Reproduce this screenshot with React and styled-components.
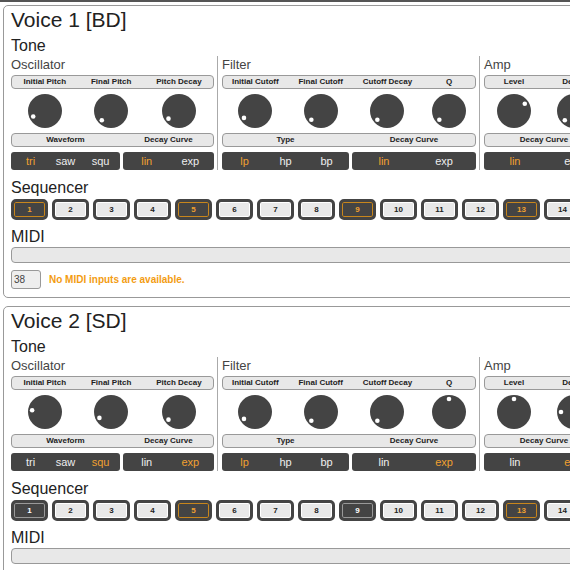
import React from 'react'
import styled, { createGlobalStyle } from 'styled-components'

const GlobalStyle = createGlobalStyle`
  html, body {
    margin: 0;
    padding: 0;
    overflow: hidden;
    background: #fff;
  }
  body {
    font-family: 'Liberation Sans', Arial, sans-serif;
    color: #222;
  }
`

const ORANGE = '#f0a030'

const voices = [
  {
    name: 'Voice 1 [BD]',
    osc: [-115, -135, -126],
    filter: [-122, -132, -132, -132],
    amp: [56, -135],
    wave: 'tri',
    oscCurve: 'lin',
    type: 'lp',
    filterCurve: 'lin',
    ampCurve: 'lin',
    steps: { 1: 'on', 5: 'on', 9: 'on', 13: 'on' },
    note: 38,
  },
  {
    name: 'Voice 2 [SD]',
    osc: [-82, -117, -126],
    filter: [-122, -132, -132, 0],
    amp: [0, -90],
    wave: 'squ',
    oscCurve: 'exp',
    type: 'lp',
    filterCurve: 'exp',
    ampCurve: 'exp',
    steps: { 1: 'mark', 5: 'on', 9: 'mark', 13: 'on' },
    note: 40,
  },
  {
    name: 'Voice 3 [HH]',
    osc: [-90, -120, -126],
    filter: [-122, -132, -132, 0],
    amp: [0, -90],
    wave: 'saw',
    oscCurve: 'lin',
    type: 'hp',
    filterCurve: 'lin',
    ampCurve: 'exp',
    steps: { 3: 'on', 7: 'on', 11: 'on', 15: 'on' },
    note: 42,
  },
]

const Knob = ({ angle }) => {
  const rad = (angle * Math.PI) / 180
  const x = 17 + 13 * Math.sin(rad)
  const y = 17 - 13 * Math.cos(rad)
  return (
    <svg width="34" height="34" viewBox="0 0 34 34">
      <circle cx="17" cy="17" r="17" fill="#444" />
      <circle cx={x} cy={y} r="2.3" fill="#fff" />
    </svg>
  )
}

const KnobSet = ({ labels, values }) => {
  const cols = ['1fr']
  labels.forEach((_, i) => {
    cols.push('auto')
    cols.push(i === labels.length - 1 ? '1fr' : '2fr')
  })
  return (
    <KnobGrid $cols={cols.join(' ')}>
      {labels.map((l, i) => (
        <GridLabel key={l} $col={i * 2 + 2}>
          {l}
        </GridLabel>
      ))}
      {values.map((v, i) => (
        <KnobCell key={i} $col={i * 2 + 2}>
          <Knob angle={v} />
        </KnobCell>
      ))}
    </KnobGrid>
  )
}

const SwitchSet = ({ groups }) => (
  <SwitchGrid $cols={groups.map((g) => `${g.size}fr`).join(' ')}>
    {groups.map((g, i) => (
      <GridLabel key={g.label} $col={i + 1}>
        {g.label}
      </GridLabel>
    ))}
    {groups.map((g, i) => (
      <SwitchGroup key={i} $col={i + 1}>
        {g.options.map((o) => (
          <Option key={o} $active={o === g.value}>
            {o}
          </Option>
        ))}
      </SwitchGroup>
    ))}
  </SwitchGrid>
)

const Voice = ({ v }) => (
  <VoiceBox>
    <VoiceTitle>{v.name}</VoiceTitle>
    <Heading>Tone</Heading>
    <ToneRow>
      <Section $width={203}>
        <SectionTitle>Oscillator</SectionTitle>
        <KnobSet labels={['Initial Pitch', 'Final Pitch', 'Pitch Decay']} values={v.osc} />
        <SwitchSet
          groups={[
            { label: 'Waveform', size: 109, options: ['tri', 'saw', 'squ'], value: v.wave },
            { label: 'Decay Curve', size: 91, options: ['lin', 'exp'], value: v.oscCurve },
          ]}
        />
      </Section>
      <Section $width={254} $divided>
        <SectionTitle>Filter</SectionTitle>
        <KnobSet
          labels={['Initial Cutoff', 'Final Cutoff', 'Cutoff Decay', 'Q']}
          values={v.filter}
        />
        <SwitchSet
          groups={[
            { label: 'Type', size: 127, options: ['lp', 'hp', 'bp'], value: v.type },
            { label: 'Decay Curve', size: 124, options: ['lin', 'exp'], value: v.filterCurve },
          ]}
        />
      </Section>
      <Section $width={120} $divided>
        <SectionTitle>Amp</SectionTitle>
        <KnobSet labels={['Level', 'Decay']} values={v.amp} />
        <SwitchSet
          groups={[{ label: 'Decay Curve', size: 1, options: ['lin', 'exp'], value: v.ampCurve }]}
        />
      </Section>
    </ToneRow>
    <Heading $top={8}>Sequencer</Heading>
    <StepRow>
      {Array.from({ length: 16 }, (_, i) => (
        <Step key={i} $state={v.steps[i + 1] || 'off'}>
          {i + 1}
        </Step>
      ))}
    </StepRow>
    <Heading $top={7}>MIDI</Heading>
    <SelectBar />
    <MidiRow>
      <NoteInput defaultValue={v.note} />
      <Warning>No MIDI inputs are available.</Warning>
    </MidiRow>
  </VoiceBox>
)

export default function App() {
  return (
    <Page>
      <GlobalStyle />
      <TopRule />
      {voices.map((v) => (
        <Voice key={v.name} v={v} />
      ))}
    </Page>
  )
}

const Page = styled.div`
  width: 760px;
`

const TopRule = styled.div`
  height: 2px;
  background: #555;
  margin-bottom: 3px;
`

const VoiceBox = styled.div`
  box-sizing: border-box;
  width: 720px;
  margin: 0 0 8px 3px;
  padding: 0 7px 8px 7px;
  border: 1px solid #999;
  border-radius: 5px;
`

const VoiceTitle = styled.h2`
  margin: 0 0 2px 0;
  font-size: 21px;
  font-weight: normal;
  line-height: 28px;
  color: #222;
`

const Heading = styled.h3`
  margin: ${(p) => p.$top || 0}px 0 0 0;
  font-size: 16px;
  font-weight: normal;
  line-height: 20px;
  color: #222;
`

const ToneRow = styled.div`
  display: flex;
  align-items: stretch;
`

const Section = styled.div`
  box-sizing: content-box;
  width: ${(p) => p.$width}px;
  flex: none;
  padding: 0 3px 0 ${(p) => (p.$divided ? 3 : 0)}px;
  border-left: ${(p) => (p.$divided ? '1px solid #aaa' : 'none')};
  ${(p) => p.$divided && 'padding-left: 4px;'}
`

const SectionTitle = styled.h4`
  margin: 0 0 1px 0;
  font-size: 13px;
  font-weight: normal;
  line-height: 18px;
  color: #444;
`

const KnobGrid = styled.div`
  display: grid;
  grid-template-columns: ${(p) => p.$cols};
  grid-template-rows: 14px 44px;
  &::before {
    content: '';
    grid-row: 1;
    grid-column: 1 / -1;
    box-sizing: border-box;
    background: #e8e8e8;
    border: 1px solid #999;
    border-radius: 4px;
  }
`

const GridLabel = styled.div`
  grid-row: 1;
  grid-column: ${(p) => p.$col};
  z-index: 1;
  align-self: center;
  justify-self: center;
  font-size: 8px;
  font-weight: bold;
  line-height: 10px;
  color: #222;
  white-space: nowrap;
`

const KnobCell = styled.div`
  grid-row: 2;
  grid-column: ${(p) => p.$col};
  justify-self: center;
  align-self: center;
  display: flex;
  height: 34px;
`

const SwitchGrid = styled.div`
  display: grid;
  grid-template-columns: ${(p) => p.$cols};
  grid-template-rows: 14px 18px;
  column-gap: 3px;
  row-gap: 5px;
  &::before {
    content: '';
    grid-row: 1;
    grid-column: 1 / -1;
    box-sizing: border-box;
    background: #e8e8e8;
    border: 1px solid #999;
    border-radius: 4px;
  }
`

const SwitchGroup = styled.div`
  grid-row: 2;
  grid-column: ${(p) => p.$col};
  display: flex;
  padding: 0 2px;
  background: #444;
  border-radius: 3px;
`

const Option = styled.span`
  flex: 1 1 0;
  text-align: center;
  font-size: 11px;
  line-height: 18px;
  color: ${(p) => (p.$active ? ORANGE : '#eee')};
`

const StepRow = styled.div`
  display: flex;
  gap: 4px;
  margin-top: 1px;
`

const Step = styled.div`
  box-sizing: border-box;
  width: 37px;
  height: 21px;
  flex: none;
  border: 3px solid #444;
  border-radius: 5px;
  box-shadow: inset 0 0 0 1px
    ${(p) => (p.$state === 'on' ? '#c8861c' : p.$state === 'mark' ? '#999' : '#fff')};
  background: ${(p) => (p.$state === 'off' ? '#e8e8e8' : '#444')};
  color: ${(p) => (p.$state === 'on' ? ORANGE : p.$state === 'mark' ? '#fff' : '#222')};
  font-size: 8px;
  font-weight: bold;
  line-height: 15px;
  text-align: center;
`

const SelectBar = styled.div`
  box-sizing: border-box;
  height: 16px;
  background: #e8e8e8;
  border: 1px solid #999;
  border-radius: 4px;
`

const MidiRow = styled.div`
  display: flex;
  align-items: center;
  gap: 8px;
  margin-top: 7px;
`

const NoteInput = styled.input`
  box-sizing: border-box;
  width: 30px;
  height: 19px;
  margin: 0;
  padding: 0 2px;
  border: 1px solid #999;
  border-radius: 3px;
  background: #eee;
  font-family: 'Liberation Sans', Arial, sans-serif;
  font-size: 10px;
  color: #444;
`

const Warning = styled.span`
  font-size: 10px;
  font-weight: bold;
  color: #f39c12;
`
